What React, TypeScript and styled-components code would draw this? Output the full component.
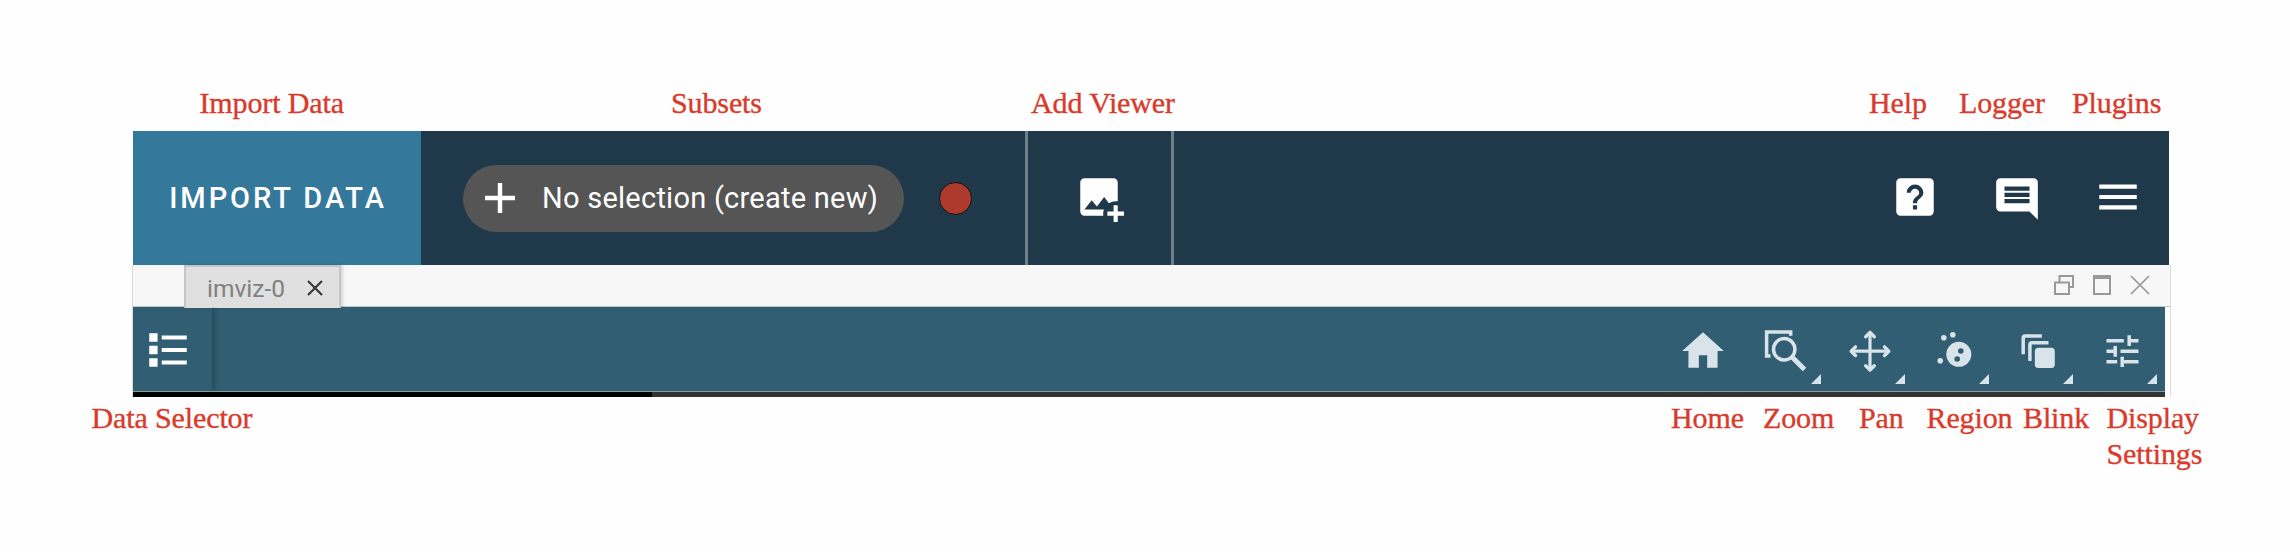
import React from "react";
import styled, { createGlobalStyle } from "styled-components";

const Global = createGlobalStyle`
  body { margin: 0; background: #fff; }
  * { box-sizing: border-box; }
`;

const Page = styled.main`
  width: 2290px;
  height: 552px;
  display: flex;
  flex-direction: column;
  background: #fefefe;
  overflow: hidden;
`;

const Notes = styled.div<{ $top: number; $bottom?: number }>`
  display: flex;
  padding: ${(p) => p.$top}px 0 ${(p) => p.$bottom ?? 0}px;
  font: 30px/36px "Liberation Serif", serif;
  letter-spacing: -0.12px;
  -webkit-text-stroke: 0.35px #d93a2b;
  color: #d93a2b;
`;

const Note = styled.span<{ $gap: number; $width: number }>`
  margin-left: ${(p) => p.$gap}px;
  width: ${(p) => p.$width}px;
  flex: none;
  white-space: nowrap;
`;

const Window = styled.section`
  margin-left: 132px;
  width: 2039px;
`;

const AppBar = styled.header`
  margin-left: 1px;
  height: 134px;
  width: 2036px;
  display: flex;
  align-items: center;
  background: #1f394a;
  color: #fff;
  font-family: Roboto, sans-serif;
`;

const ImportButton = styled.button`
  width: 288px;
  height: 100%;
  padding: 0 0 1px 2px;
  border: 0;
  background: #34799c;
  color: #fff;
  font: 500 29px Roboto, sans-serif;
  letter-spacing: 2.95px;
`;

const SubsetPill = styled.div`
  margin-left: 42px;
  width: 441px;
  height: 67px;
  border-radius: 34px;
  background: #555;
  display: flex;
  align-items: center;
  padding: 0 0 1px 22px;
  font-size: 29px;
  letter-spacing: 0.25px;
  white-space: nowrap;
`;

const PillText = styled.span`
  margin-left: 27px;
`;

const ColorDot = styled.i`
  margin-left: 35px;
  width: 33px;
  height: 33px;
  border-radius: 50%;
  border: 1.5px solid #111;
  background: #ad3b2d;
`;

const AddViewer = styled.div`
  margin-left: 53px;
  width: 149px;
  height: 100%;
  border-left: 3px solid #6b7f8b;
  border-right: 3px solid #6b7f8b;
  display: flex;
  align-items: center;
  justify-content: center;
  padding: 0 2px 3px 0;
`;

const BarActions = styled.div`
  margin-left: auto;
  padding: 0 26px 1px 0;
  display: flex;
  gap: 51.5px;
`;

const Glyph = styled.svg<{ $drop?: number }>`
  display: block;
  flex: none;
  margin-top: ${(p) => p.$drop ?? 0}px;
`;

const ViewerStack = styled.div`
  border-left: 1px solid #d8dcdd;
  border-right: 1px solid #dcdcdc;
`;

const TabStrip = styled.div`
  height: 42px;
  display: flex;
  align-items: flex-start;
  background: #f7f7f7;
  border-bottom: 1px solid #b9c6cc;
`;

const Tab = styled.div`
  margin-left: 51px;
  width: 157px;
  height: 43px;
  flex: none;
  display: flex;
  align-items: center;
  padding: 1px 0 0 21px;
  background: #e0e0e0;
  border: 2px solid #c3c5c6;
  border-bottom: 0;
  box-shadow: 2px 0 3px #0002;
  color: #808080;
  font: 24.5px Roboto, sans-serif;
  position: relative;
`;

const TabClose = styled.svg`
  margin-left: 22px;
`;

const WindowControls = styled.div`
  margin-left: auto;
  padding: 10px 20px 0 0;
  display: flex;
  gap: 18px;
`;

const ViewerBar = styled.nav`
  width: 2032px;
  height: 85px;
  display: flex;
  background: #315e73;
  border-bottom: 1px solid #8d9699;
`;

const DataMenu = styled.div`
  width: 79px;
  display: flex;
  align-items: center;
  padding: 2px 0 0 10px;
  box-shadow: 2px 0 5px #0004;
  clip-path: inset(0 -10px 0 0);
`;

const Tools = styled.div`
  margin-left: auto;
  display: flex;
`;

const Tool = styled.div`
  width: 84px;
  display: flex;
  justify-content: center;
  padding-top: 19px;
  position: relative;
`;

const Corner = styled.i`
  position: absolute;
  right: 8px;
  top: 67px;
  width: 10px;
  height: 10px;
  background: #d9e3ea;
  clip-path: polygon(100% 0, 100% 100%, 0 100%);
`;

const Canvas = styled.div`
  width: 2032px;
  height: 5px;
  background: linear-gradient(90deg, #000 519px, #333 519px);
`;

const tint = "#d9e3ea";

const Icon = ({ d, drop, fill = "#fff" }: { d: string; drop?: number; fill?: string }) => (
  <Glyph $drop={drop} width="50" height="50" viewBox="0 0 24 24" fill={fill}>
    <path d={d} fillRule="evenodd" />
  </Glyph>
);

const MenuTool = ({ children }: { children: React.ReactNode }) => (
  <Tool>
    <Glyph width="50" height="50" viewBox="0 0 50 50" fill="none" stroke={tint} strokeWidth="3.5">
      {children}
    </Glyph>
    <Corner />
  </Tool>
);

const paths = {
  imagePlus:
    "M5,3A2,2 0 0,0 3,5V19A2,2 0 0,0 5,21H14.09C14.03,20.67 14,20.34 14,20C14,19.32 14.12,18.64 14.35,18H5L8.5,13.5L11,16.5L14.5,12L16.73,14.97C17.7,14.34 18.84,14 20,14C20.34,14 20.67,14.03 21,14.09V5C21,3.89 20.1,3 19,3H5M19,16V19H16V21H19V24H21V21H24V19H21V16H19Z",
  help: "M11,18H13V16H11V18M12,6A4,4 0 0,0 8,10H10A2,2 0 0,1 12,8A2,2 0 0,1 14,10C14,12 11,11.75 11,15H13C13,12.75 16,12.5 16,10A4,4 0 0,0 12,6M5,3H19A2,2 0 0,1 21,5V19A2,2 0 0,1 19,21H5A2,2 0 0,1 3,19V5A2,2 0 0,1 5,3Z",
  message:
    "M18,8H6V6H18V8M18,11H6V9H18V11M18,14H6V12H18V14M22,4A2,2 0 0,0 20,2H4A2,2 0 0,0 2,4V16A2,2 0 0,0 4,18H18L22,22V4Z",
  menu: "M3,6H21V8H3V6M3,11H21V13H3V11M3,16H21V18H3V16Z",
  list: "M3,4H7V8H3V4M9,5V7H21V5H9M3,10H7V14H3V10M9,11V13H21V11H9M3,16H7V20H3V16M9,17V19H21V17H9",
  home: "M10,20V14H14V20H19V12H22L12,3L2,12H5V20H10Z",
};

export default function App() {
  return (
    <Page>
      <Global />
      <Notes $top={85} $bottom={10}>
        <Note $gap={199.5} $width={150.5}>Import Data</Note>
        <Note $gap={321} $width={95}>Subsets</Note>
        <Note $gap={265} $width={150}>Add Viewer</Note>
        <Note $gap={688} $width={60}>Help</Note>
        <Note $gap={30} $width={90}>Logger</Note>
        <Note $gap={23} $width={90}>Plugins</Note>
      </Notes>
      <Window>
        <AppBar>
          <ImportButton>IMPORT DATA</ImportButton>
          <SubsetPill>
            <Glyph width="30" height="30" viewBox="0 0 30 30" stroke="#fff" strokeWidth="4.4">
              <path d="M15 0V30M0 15H30" />
            </Glyph>
            <PillText>No selection (create new)</PillText>
          </SubsetPill>
          <ColorDot />
          <AddViewer><Icon d={paths.imagePlus} /></AddViewer>
          <BarActions>
            <Icon d={paths.help} />
            <Icon d={paths.message} drop={2} />
            <Icon d={paths.menu} />
          </BarActions>
        </AppBar>
        <ViewerStack>
          <TabStrip>
            <Tab>
              imviz-0
              <TabClose width="16" height="16" viewBox="0 0 16 16" stroke="#333" strokeWidth="2">
                <path d="M1 1L15 15M15 1L1 15" />
              </TabClose>
            </Tab>
            <WindowControls>
              <svg width="20" height="20" viewBox="0 0 20 20" fill="none" stroke="#999" strokeWidth="2">
                <path d="M1 7.5H15V19H1ZM5.5 7.5V1H19V12H15" />
              </svg>
              <svg width="20" height="20" viewBox="0 0 20 20" fill="none" stroke="#999" strokeWidth="2">
                <path d="M2 1H18V19H2ZM2 3H18" />
              </svg>
              <svg width="20" height="20" viewBox="0 0 20 20" fill="none" stroke="#999" strokeWidth="1.7">
                <path d="M1 1L19 19M19 1L1 19" />
              </svg>
            </WindowControls>
          </TabStrip>
          <ViewerBar>
            <DataMenu><Icon d={paths.list} /></DataMenu>
            <Tools>
              <Tool><Icon d={paths.home} fill={tint} /></Tool>
              <MenuTool>
                <path d="M28.7 9.8V6H4.6V30H8.5" />
                <circle cx="22.2" cy="23.3" r="10.7" />
                <path d="M29.5 30.5L42.5 43.5" strokeWidth="5" />
              </MenuTool>
              <MenuTool>
                <path d="M5 25.2H43M24 6.2V44.2" strokeWidth="3.2" />
                <path
                  d="M9.5 20.9L5.2 25.2L9.5 29.5M38.5 20.9L42.8 25.2L38.5 29.5M19.7 10.7L24 6.4L28.3 10.7M19.7 39.7L24 44L28.3 39.7"
                  strokeLinecap="round"
                  strokeLinejoin="round"
                  strokeWidth="3.4"
                />
              </MenuTool>
              <MenuTool>
                <g fill={tint} stroke="none">
                  <circle cx="28.8" cy="28.3" r="12.5" />
                  <circle cx="13.8" cy="11.7" r="2.8" />
                  <circle cx="22.8" cy="8.7" r="2.8" />
                  <circle cx="10.2" cy="34.7" r="2.8" />
                </g>
                <g fill="#315e73" stroke="none">
                  <circle cx="30.8" cy="25" r="2.8" />
                  <circle cx="27.2" cy="33" r="2.8" />
                </g>
              </MenuTool>
              <MenuTool>
                <path d="M9.2 28.3V12Q9.2 10 11.2 10H27.8M15.9 35V18.7Q15.9 16.7 17.9 16.7H34.5" />
                <rect x="20.8" y="21.7" width="20" height="20.3" rx="3.5" fill={tint} stroke="none" />
              </MenuTool>
              <MenuTool>
                <path d="M8.5 14.7H25.8M31.2 9.3V20M31.2 14.7H40.5M8.5 25.3H17.2M17.2 20V30.7M22.5 25.3H40.5M8.5 35.7H19.2M24.2 30.7V41M24.2 35.7H40.5" />
              </MenuTool>
            </Tools>
          </ViewerBar>
          <Canvas />
        </ViewerStack>
      </Window>
      <Notes $top={3}>
        <Note $gap={91.5} $width={168.5}>Data Selector</Note>
        <Note $gap={1411} $width={75}>Home</Note>
        <Note $gap={17} $width={75}>Zoom</Note>
        <Note $gap={21} $width={50}>Pan</Note>
        <Note $gap={17.5} $width={88}>Region</Note>
        <Note $gap={8.5} $width={70}>Blink</Note>
        <Note $gap={13.5} $width={100}>Display<br />Settings</Note>
      </Notes>
    </Page>
  );
}
